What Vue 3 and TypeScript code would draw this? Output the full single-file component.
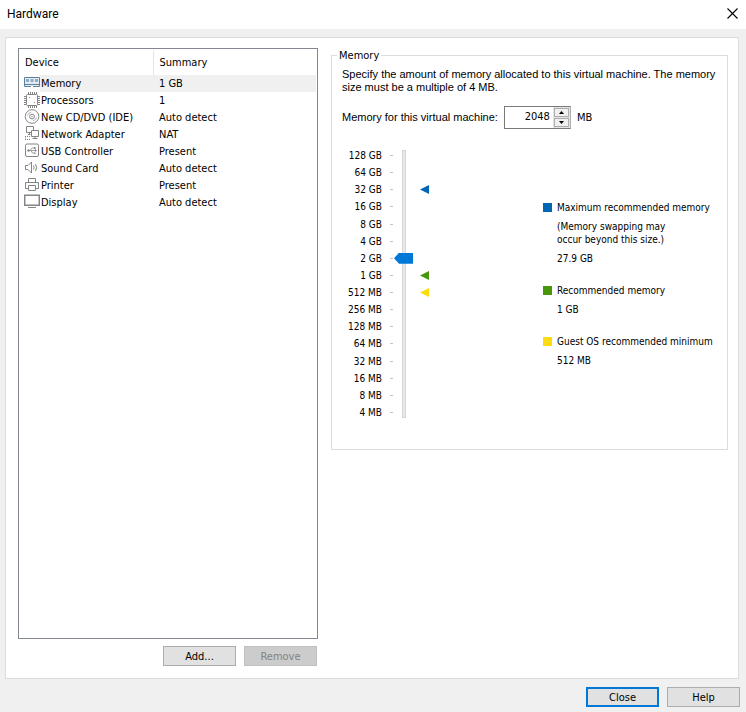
<script setup lang="ts">
import { computed, ref } from 'vue'

interface Device {
  id: string
  name: string
  summary: string
}

const devices: Device[] = [
  { id: 'memory', name: 'Memory', summary: '1 GB' },
  { id: 'cpu', name: 'Processors', summary: '1' },
  { id: 'disc', name: 'New CD/DVD (IDE)', summary: 'Auto detect' },
  { id: 'network', name: 'Network Adapter', summary: 'NAT' },
  { id: 'usb', name: 'USB Controller', summary: 'Present' },
  { id: 'sound', name: 'Sound Card', summary: 'Auto detect' },
  { id: 'printer', name: 'Printer', summary: 'Present' },
  { id: 'display', name: 'Display', summary: 'Auto detect' },
]

const sizes: string[] = [
  '128 GB', '64 GB', '32 GB', '16 GB', '8 GB', '4 GB', '2 GB', '1 GB',
  '512 MB', '256 MB', '128 MB', '64 MB', '32 MB', '16 MB', '8 MB', '4 MB',
]

const markers: Record<string, string> = {
  '32 GB': 'max',
  '1 GB': 'recommended',
  '512 MB': 'minimum',
}

const selected = ref('memory')
const memory = ref(2048)

// Slider positions are powers of two, counted up from 4 MB.
const step = computed({
  get: () => Math.round(Math.log2(memory.value / 4)),
  set: (v: number) => { memory.value = 4 * 2 ** Number(v) },
})

function nudge(delta: number): void {
  memory.value = Math.min(131072, Math.max(4, memory.value + delta))
}
</script>

<template>
  <div class="window">
    <header class="titlebar">
      <h1>Hardware</h1>
      <button class="dismiss" type="button" aria-label="Close window">
        <svg width="11" height="11" viewBox="0 0 11 11"><path d="M.5.5l10 10M10.5.5l-10 10" stroke="#000" stroke-width="1.1" /></svg>
      </button>
    </header>

    <main class="panel">
      <section class="left">
        <div class="list">
          <table>
            <thead>
              <tr><th class="device">Device</th><th>Summary</th></tr>
            </thead>
            <tbody>
              <tr v-for="d in devices" :key="d.id" :class="{ selected: d.id === selected }" @click="selected = d.id">
                <td>
                  <div class="name">
                    <svg class="icon" width="16" height="16" viewBox="0 0 16 16" fill="none" stroke="#858585" aria-hidden="true">
                      <g v-if="d.id === 'memory'" stroke="#5d7f9b">
                        <path d="M.5 2.500h15v9h-15z" fill="#e4edf4" />
                        <path d="M2 4h3v3H2zM6.500 4h3v3h-3zM11 4h3v3h-3z" fill="#8fabc1" stroke="none" />
                        <path d="M1 9.500h14" />
                        <path d="M7 11h2v1H7z" fill="#fff" stroke="none" />
                      </g>
                      <g v-else-if="d.id === 'cpu'">
                        <rect x="2.500" y="2.500" width="11" height="11" rx="1" />
                        <path d="M4.500 0v2M6.500 0v2M8.500 0v2M10.500 0v2M12.500 0v2M4.500 14v2M6.500 14v2M8.500 14v2M10.500 14v2M12.500 14v2M0 4.500h2M0 6.500h2M0 8.500h2M0 10.500h2M0 12.500h2M14 4.500h2M14 6.500h2M14 8.500h2M14 10.500h2M14 12.500h2" />
                        <path d="M5 5h1v1H5zM10 10h1v1h-1z" fill="#858585" stroke="none" />
                      </g>
                      <g v-else-if="d.id === 'disc'">
                        <circle cx="8" cy="7.500" r="6.800" />
                        <circle cx="8" cy="7.500" r="2.400" />
                        <circle cx="8" cy="7.500" r=".7" fill="#858585" stroke="none" />
                        <path d="M3.500 6.500A4.600 4.600 0 0 1 7 3.200M12.500 8.500A4.600 4.600 0 0 1 9 11.800" stroke="#b0b0b0" />
                      </g>
                      <g v-else-if="d.id === 'network'">
                        <path d="M2.500 .5h7v6h-7zM4 8.500h2.500M5.500 7v1.500" />
                        <path d="M7.500 4.500h7v6h-7z" fill="#fff" />
                        <path d="M11 11v1.500M8.500 12.500h5" />
                        <path d="M1 10.500h5.500M1.500 10.500v3M1 13.500h6" stroke-dasharray="1 1" />
                      </g>
                      <g v-else-if="d.id === 'usb'">
                        <rect x="1.500" y="1" width="13" height="12.500" rx="1.500" />
                        <path d="M5 7.500h7M6 7.500l2-2.500h2M7 7.500l1.500 2.500H10" stroke="#a0a0a0" />
                        <circle cx="4.500" cy="7.500" r="1.200" fill="#858585" stroke="none" />
                        <path d="M11 6l2 1.500L11 9zM10 4h1.500v2H10zM10 9.500h1.500v1.500H10z" fill="#858585" stroke="none" />
                      </g>
                      <g v-else-if="d.id === 'sound'">
                        <path d="M1.500 5.500h2.500l3.500-3.500v11l-3.500-3.500H1.500z" />
                        <path d="M9.500 5.500q1.300 2 0 4M11.500 4q2.200 3.500 0 7" />
                      </g>
                      <g v-else-if="d.id === 'printer'">
                        <path d="M4.500 5V1.500h7V5M4 11.500H1.500v-6h13v6H12M4.500 8.500h7v5h-7z" />
                      </g>
                      <g v-else>
                        <path d="M.75 1.250h14.500v10H.75z" stroke-width="1.500" />
                        <path d="M4 13.500h8" />
                      </g>
                    </svg>
                    <span>{{ d.name }}</span>
                  </div>
                </td>
                <td class="summary">{{ d.summary }}</td>
              </tr>
            </tbody>
          </table>
        </div>
        <div class="actions">
          <button class="btn" type="button">Add...</button>
          <button class="btn" type="button" disabled>Remove</button>
        </div>
      </section>

      <fieldset class="memory">
        <legend>Memory</legend>
        <p>Specify the amount of memory allocated to this virtual machine. The memory size must be a multiple of 4 MB.</p>
        <div class="amount">
          <label for="memory-size">Memory for this virtual machine:</label>
          <div class="spinner">
            <input id="memory-size" v-model.number="memory" type="text" inputmode="numeric">
            <div class="arrows">
              <button type="button" aria-label="Increase memory" @click="nudge(4)">
                <svg width="5" height="3" viewBox="0 0 5 3"><path d="M2.500 0L5 3H0z" /></svg>
              </button>
              <button type="button" aria-label="Decrease memory" @click="nudge(-4)">
                <svg width="5" height="3" viewBox="0 0 5 3"><path d="M0 0h5L2.500 3z" /></svg>
              </button>
            </div>
          </div>
          <span>MB</span>
        </div>

        <div class="sizing">
          <ol class="scale">
            <li v-for="s in sizes" :key="s"><span>{{ s }}</span><i /></li>
          </ol>
          <input v-model.number="step" class="slider" type="range" min="0" max="15" aria-label="Memory size">
          <div class="markers">
            <div v-for="s in sizes" :key="s">
              <svg v-if="markers[s]" :class="markers[s]" width="9" height="9" viewBox="0 0 9 9"><path d="M0 4.500L9 0v9z" /></svg>
            </div>
          </div>
          <dl class="key">
            <div>
              <dt><i class="max" />Maximum recommended memory</dt>
              <dd>(Memory swapping may<br>occur beyond this size.)</dd>
              <dd>27.9 GB</dd>
            </div>
            <div>
              <dt><i class="recommended" />Recommended memory</dt>
              <dd>1 GB</dd>
            </div>
            <div>
              <dt><i class="minimum" />Guest OS recommended minimum</dt>
              <dd>512 MB</dd>
            </div>
          </dl>
        </div>
      </fieldset>
    </main>

    <footer class="footer">
      <button class="btn primary" type="button">Close</button>
      <button class="btn" type="button">Help</button>
    </footer>
  </div>
</template>

<style>
body {
  background: #f0f0f0;
}
</style>

<style scoped>
* {
  box-sizing: border-box;
}

.window {
  display: flex;
  flex-direction: column;
  min-height: 100vh;
  background: #f0f0f0;
  color: #000;
  font: 11px/13px "DejaVu Sans Condensed", "DejaVu Sans", sans-serif;
}

button,
input {
  font: inherit;
  color: inherit;
}

.titlebar {
  display: flex;
  align-items: center;
  justify-content: space-between;
  height: 29px;
  padding: 0 8px 2px 7px;
  background: #fff;
}

h1 {
  margin: 0;
  font: 12px/16px Roboto, sans-serif;
}

.dismiss {
  display: flex;
  padding: 0;
  border: 0;
  background: none;
}

.panel {
  display: flex;
  flex: 1;
  align-items: flex-start;
  gap: 13px;
  margin: 8px 7px 0 5px;
  padding: 10px 10px 12px 12px;
  border: 1px solid #dcdcdc;
  background: #fff;
}

.left {
  display: flex;
  flex: 0 0 300px;
  flex-direction: column;
  align-self: stretch;
  gap: 7px;
}

.list {
  flex: 1;
  padding: 1px;
  border: 1px solid #828790;
}

table {
  width: 100%;
  border-collapse: collapse;
  table-layout: fixed;
}

th {
  height: 25px;
  padding: 0 6px 0 5px;
  font-weight: normal;
  text-align: left;
}

th.device {
  width: 133px;
  border-right: 1px solid #e5e5e5;
}

th + th {
  padding-left: 6px;
}

td {
  height: 17px;
  padding: 0;
}

.name {
  display: flex;
  height: 17px;
  padding-left: 4px;
}

.name span {
  flex: 1;
  padding: 2px 1px;
}

.summary {
  padding-left: 6px;
}

.selected .name span,
.selected .summary {
  background: #f0f0f0;
}

.actions {
  display: flex;
  justify-content: flex-end;
  gap: 8px;
  padding-right: 1px;
}

.btn {
  width: 73px;
  height: 20px;
  padding: 0;
  border: 1px solid #adadad;
  background: #e1e1e1;
}

.btn:disabled {
  border-color: #bfbfbf;
  background: #ccc;
  color: #838383;
}

.btn.primary {
  border: 2px solid #0078d7;
}

.memory {
  flex: 1;
  min-width: 0;
  margin: 0;
  padding: 5px 10px 28px;
  border: 1px solid #dcdcdc;
}

legend {
  margin-left: -5px;
  padding: 0 2px;
  line-height: 15px;
}

p,
label {
  margin: 0;
  font-family: "Liberation Sans", Arial, sans-serif;
}

.amount {
  display: flex;
  align-items: center;
  gap: 6px;
  margin-top: 12px;
}

.spinner {
  display: flex;
  width: 67px;
  height: 23px;
  border: 1px solid #7a7a7a;
  border-right-color: #abadb3;
}

.spinner input {
  flex: 1;
  min-width: 0;
  padding: 0 3px 2px 0;
  border: 0;
  outline: 0;
  text-align: right;
}

.arrows {
  display: flex;
  flex-direction: column;
  gap: 1px;
  width: 17px;
  padding: 1px;
  background: #e3e4e8;
}

.arrows button {
  display: flex;
  flex: 1;
  align-items: center;
  justify-content: center;
  padding: 0;
  border: 1px solid #adadad;
  background: #f0f0f0;
}

.sizing {
  display: flex;
  height: 274px;
  margin-top: 18px;
  font-size: 10px;
}

.scale,
.markers {
  display: grid;
  grid-template-rows: repeat(16, 1fr);
  margin: 0;
  padding: 0;
  list-style: none;
}

.scale {
  width: 52px;
}

.scale li,
.markers div {
  display: flex;
  align-items: center;
}

.scale span {
  width: 40px;
  margin-right: 8px;
  text-align: right;
}

.scale i {
  width: 3px;
  height: 1px;
  background: #c4c4c4;
}

.slider {
  width: 19px;
  height: 268px;
  margin: 3px 7px 0 0;
  appearance: none;
  background: linear-gradient(#e7eaea, #e7eaea) 9px 1px / 2px 266px no-repeat, linear-gradient(#d6d6d6, #d6d6d6) 8px 0 / 4px 100% no-repeat;
  writing-mode: vertical-lr;
  direction: rtl;
}

.slider::-webkit-slider-thumb {
  width: 19px;
  height: 11px;
  appearance: none;
  background: #0078d7;
  clip-path: polygon(0 50%, 5px 0, 100% 0, 100% 100%, 5px 100%);
}

.markers {
  width: 9px;
}

.max {
  background: #0066b3;
}

.recommended {
  background: #48960c;
}

.minimum {
  background: #ffdc0f;
}

.markers svg {
  background: none;
}

.markers .max {
  fill: #0066b3;
}

.markers .recommended {
  fill: #48960c;
}

.markers .minimum {
  fill: #ffdc0f;
}

.key {
  display: flex;
  flex-direction: column;
  gap: 19px;
  min-width: 174px;
  margin: 0 0 0 auto;
  padding-top: 54px;
  white-space: nowrap;
}

.key > div {
  display: flex;
  flex-direction: column;
  gap: 6px;
}

dt {
  display: flex;
  align-items: center;
}

dt i {
  width: 9px;
  height: 9px;
  margin-right: 5px;
}

dd {
  margin: 0 0 0 14px;
}

.footer {
  display: flex;
  justify-content: flex-end;
  gap: 8px;
  padding: 8px 6px 5px;
}
</style>
